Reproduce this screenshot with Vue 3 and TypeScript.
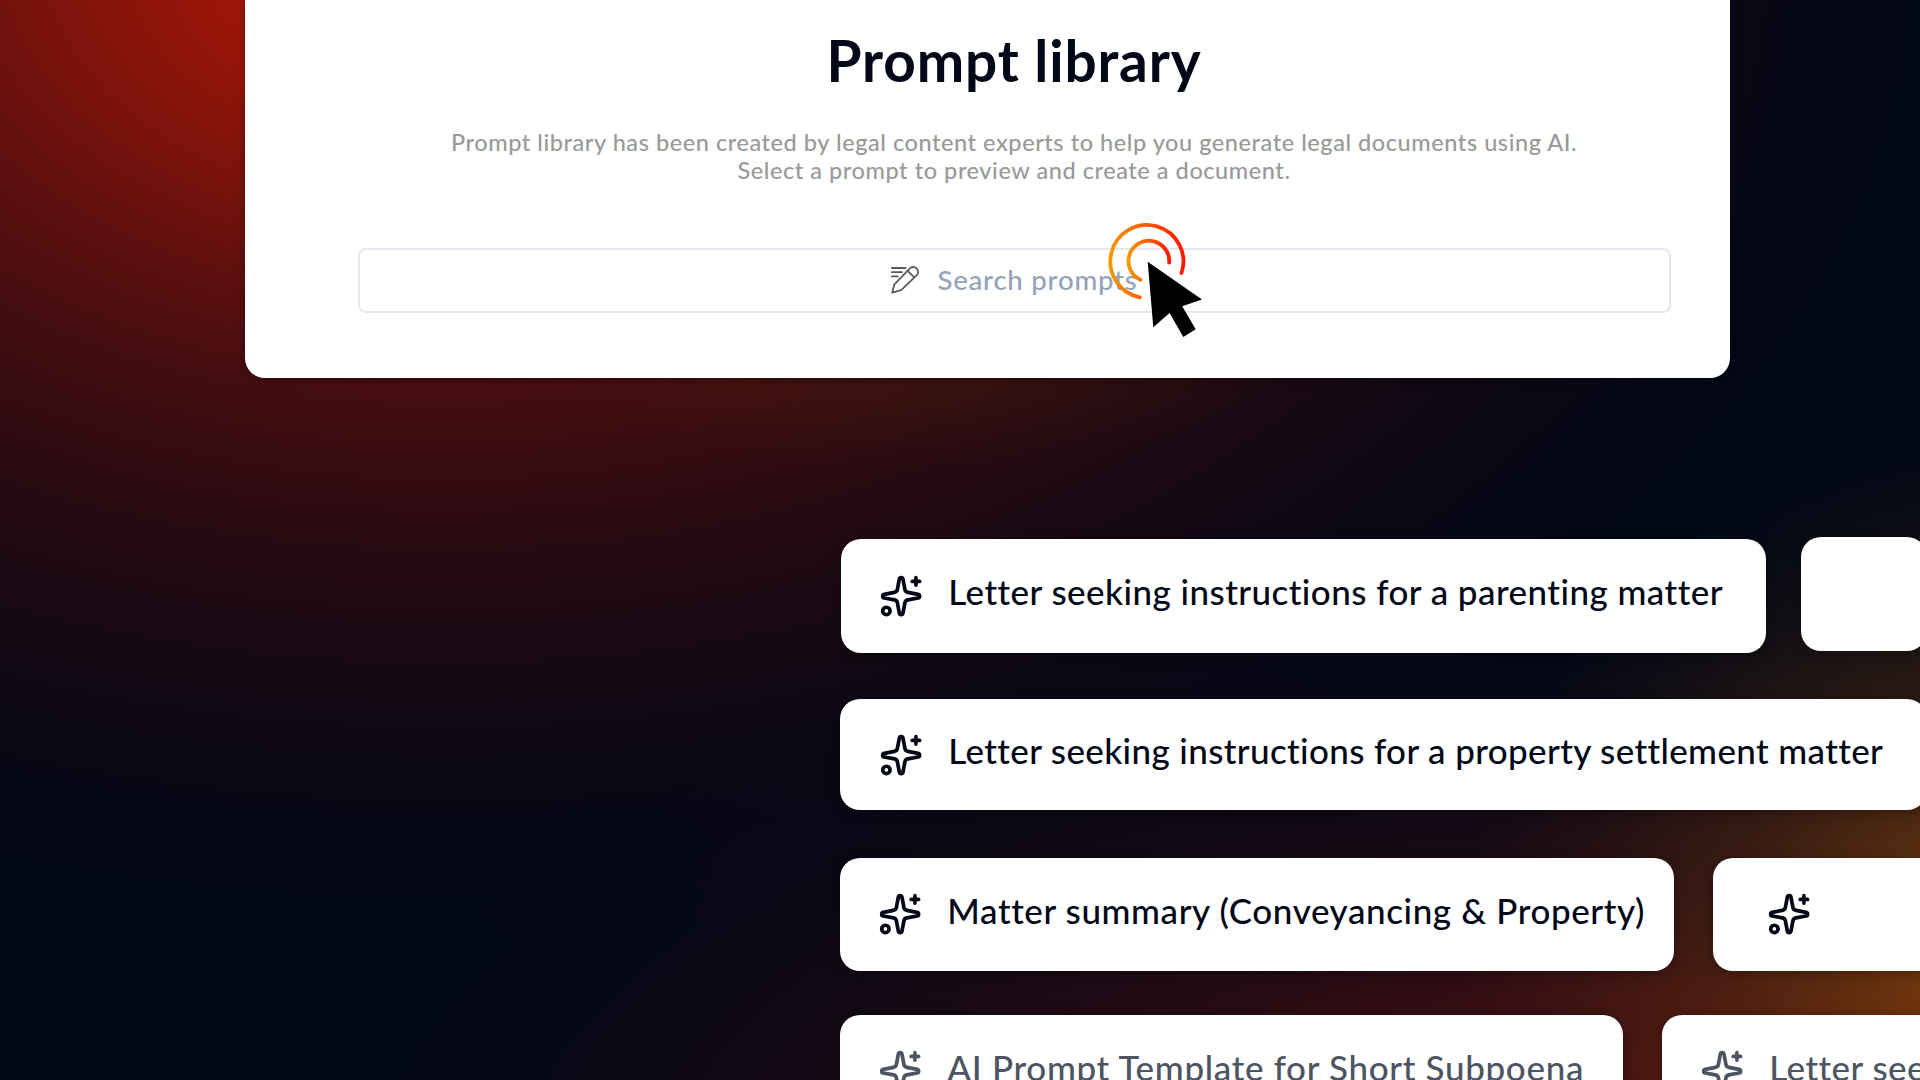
<template>
  <div class="page">
    <section class="panel">
      <h1 class="title">Prompt library</h1>
      <p class="subtitle">
        Prompt library has been created by legal content experts to help you generate legal documents using AI.<br />
        Select a prompt to preview and create a document.
      </p>
      <div class="search">
        <svg class="search-icon" viewBox="0 0 28 28">
          <path d="M0.8 2H14.6M0.8 6.2H11M0.8 10.4H6.8" />
          <path d="M1.2 26.7L3.2 18.7L18.6 2.6A4.8 4.8 0 0 1 25.8 9.2L10.2 24.1Z" />
          <path d="M16.6 4.8L23.3 11.3" />
        </svg>
        <span class="search-text">Search prompts</span>
      </div>
    </section>

    <div class="prompt-list">
      <div v-for="(row, i) in rows" :key="i" class="prompt-row" :class="`row-${i + 1}`">
        <div
          v-for="(card, j) in row"
          :key="j"
          class="prompt-card"
          :class="card.variant"
          :style="{ width: `${card.width}px`, letterSpacing: `${card.tracking ?? 0.45}px` }"
        >
          <svg v-if="card.icon !== false" class="card-icon" viewBox="0 0 24 24">
            <path :d="sparkle" />
            <path d="M20 2v4" />
            <path d="M22 4h-4" />
            <circle cx="4" cy="20" r="2" />
          </svg>
          <span v-if="card.text" class="card-text">{{ card.text }}</span>
        </div>
      </div>
    </div>

    <svg class="cursor" viewBox="0 0 100 120">
      <defs>
        <linearGradient id="ring-outer" gradientUnits="userSpaceOnUse" x1="8" y1="0" x2="85" y2="0">
          <stop offset="0" stop-color="#f39c00" />
          <stop offset="1" stop-color="#ff1500" />
        </linearGradient>
        <linearGradient id="ring-inner" gradientUnits="userSpaceOnUse" x1="27" y1="0" x2="71" y2="0">
          <stop offset="0" stop-color="#f39c00" />
          <stop offset="1" stop-color="#ff1500" />
        </linearGradient>
      </defs>
      <path class="ring" stroke="url(#ring-outer)" d="M81.5 53A36.5 36.5 0 1 0 39.7 77.3" />
      <path class="ring" stroke="url(#ring-inner)" d="M69.2 42.6A20.4 20.4 0 1 0 40.4 59.7" />
      <path d="M47.7 41.8L102 79.4L82.2 86.2L95.7 109.3L83.3 117L69.6 92.9L53.3 107.3Z" />
    </svg>
  </div>
</template>

<script setup lang="ts">
interface PromptCard {
  text?: string
  width: number
  tracking?: number
  icon?: boolean
  variant?: string
}

const sparkle =
  'M11.017 2.814a1 1 0 0 1 1.966 0l1.051 5.558a2 2 0 0 0 1.594 1.594l5.558 1.051a1 1 0 0 1 0 1.966l-5.558 1.051a2 2 0 0 0-1.594 1.594l-1.051 5.558a1 1 0 0 1-1.966 0l-1.051-5.558a2 2 0 0 0-1.594-1.594l-5.558-1.051a1 1 0 0 1 0-1.966l5.558-1.051a2 2 0 0 0 1.594-1.594z'

const rows: PromptCard[][] = [
  [
    { text: 'Letter seeking instructions for a parenting matter', width: 925, tracking: 0.45 },
    { width: 126, icon: false, variant: 'raised' }
  ],
  [{ text: 'Letter seeking instructions for a property settlement matter', width: 1087, tracking: 0.37 }],
  [
    { text: 'Matter summary (Conveyancing & Property)', width: 834, tracking: 0.6 },
    { width: 600, variant: 'indented' }
  ],
  [
    { text: 'AI Prompt Template for Short Subpoena', width: 783, tracking: 0.67, variant: 'muted' },
    { text: 'Letter seeking instructions', width: 600, variant: 'muted' }
  ]
]
</script>

<style>
body {
  margin: 0;
  overflow: hidden;
}
</style>

<style scoped>
.page {
  position: relative;
  width: 1920px;
  height: 1080px;
  overflow: hidden;
  font-family: Lato, 'Liberation Sans', sans-serif;
  font-variant-ligatures: none;
  color: #020817;
  background:
    radial-gradient(
      ellipse 560px 560px at 2020px 980px,
      rgba(150, 78, 10, 0.78) 0%,
      rgba(150, 78, 10, 0.66) 15%,
      rgba(150, 78, 10, 0.47) 32%,
      rgba(150, 78, 10, 0.27) 52%,
      rgba(150, 78, 10, 0.09) 80%,
      rgba(150, 78, 10, 0) 100%
    ),
    radial-gradient(
      ellipse 420px 160px at 920px 310px,
      rgba(80, 45, 10, 0.45) 0%,
      rgba(80, 45, 10, 0.18) 55%,
      rgba(80, 45, 10, 0) 100%
    ),
    radial-gradient(
      ellipse 1200px 540px at 1600px 1200px,
      rgba(120, 20, 14, 0.58) 0%,
      rgba(120, 20, 14, 0.44) 38%,
      rgba(120, 20, 14, 0.29) 50%,
      rgba(120, 20, 14, 0.17) 70%,
      rgba(120, 20, 14, 0.07) 88%,
      rgba(120, 20, 14, 0) 108%
    ),
    radial-gradient(
      ellipse 1430px 920px at 445px -50px,
      #c01906 0%,
      #a31608 14%,
      #74120c 31%,
      #5a0f0e 40%,
      #420d0f 50%,
      #290a11 64%,
      #190913 76%,
      #0c0814 88%,
      #040716 98%,
      #000716 108%
    );
}

.panel {
  box-sizing: border-box;
  width: 1485px;
  height: 378px;
  margin-left: 245px;
  padding: 26px 59px 0 112px;
  background: #fff;
  border-radius: 0 0 20px 20px;
  box-shadow: 0 2px 10px rgba(0, 0, 0, 0.3);
  text-align: center;
}

.title {
  margin: 0 0 34px;
  font-size: 56.7px;
  font-weight: 700;
  line-height: 68px;
  letter-spacing: 0.85px;
}

.subtitle {
  margin: 0 0 63px;
  font-size: 23.5px;
  font-weight: 500;
  line-height: 28.3px;
  letter-spacing: 0.56px;
  white-space: nowrap;
  color: #999;
}

.search {
  display: flex;
  align-items: center;
  justify-content: center;
  gap: 18px;
  box-sizing: border-box;
  height: 65px;
  margin-left: 1px;
  border: 2px solid #e2e8f0;
  border-radius: 8px;
}

.search-icon {
  width: 28px;
  height: 28px;
  fill: none;
  stroke: #5c5c5c;
  stroke-width: 1.8;
  stroke-linecap: round;
  stroke-linejoin: round;
}

.search-text {
  padding-bottom: 1px;
  font-size: 27.6px;
  font-weight: 500;
  letter-spacing: 0.76px;
  color: #94a3b8;
}

.prompt-list {
  margin: 161px 0 0 840px;
}

.prompt-row {
  display: flex;
  gap: 39px;
}

.row-1 {
  gap: 35px;
  height: 114px;
  margin: 0 0 46px 1px;
}

.row-2 {
  height: 111px;
  margin-bottom: 48px;
}

.row-3 {
  height: 113px;
  margin-bottom: 44px;
}

.row-4 {
  height: 113px;
}

.prompt-card {
  display: flex;
  flex-shrink: 0;
  align-items: center;
  gap: 25px;
  box-sizing: border-box;
  padding-left: 38px;
  background: #fff;
  border-radius: 20px;
  box-shadow: 0 2px 12px rgba(0, 0, 0, 0.3);
}

.row-2 .prompt-card {
  padding-top: 1px;
  padding-left: 39px;
}

.prompt-card.raised {
  margin: -2px 0 2px;
}

.prompt-card.indented {
  padding-left: 54px;
}

.prompt-card.muted {
  color: #4e5562;
}

.card-icon {
  flex-shrink: 0;
  width: 44.3px;
  height: 44.3px;
  fill: none;
  stroke: currentColor;
  stroke-width: 2;
  stroke-linecap: round;
  stroke-linejoin: round;
}

.card-text {
  padding-bottom: 9px;
  font-size: 35px;
  font-weight: 500;
  line-height: 42px;
  white-space: nowrap;
}

.row-1 .card-text,
.row-2 .card-text {
  padding-bottom: 10px;
}

/* Pointer and click rings float over the search field */
.cursor {
  position: absolute;
  top: 220px;
  left: 1100px;
  width: 100px;
  height: 120px;
  overflow: visible;
}

.ring {
  fill: none;
  stroke-width: 3.8;
  stroke-linecap: round;
}
</style>
